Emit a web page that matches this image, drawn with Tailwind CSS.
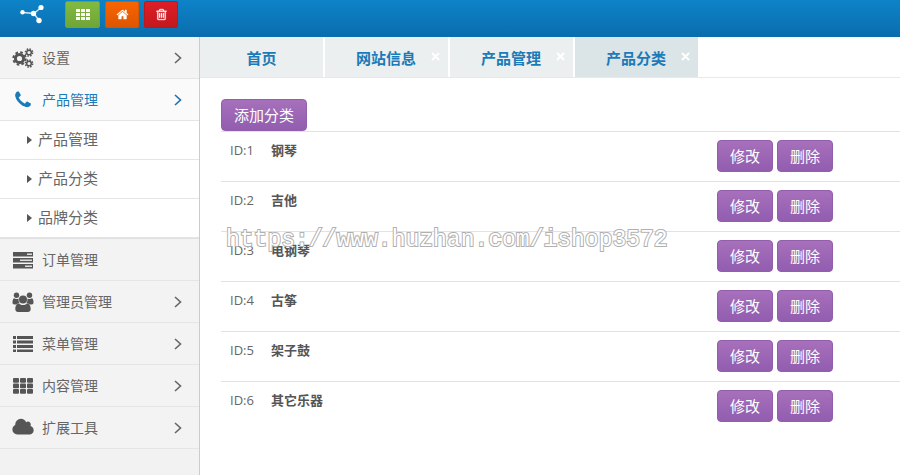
<!DOCTYPE html>
<html lang="zh-CN">
<head>
  <meta charset="UTF-8" />
  <meta name="viewport" content="width=device-width, initial-scale=1.0" />
  <title>产品分类</title>
  <script src="https://cdn.jsdelivr.net/npm/@tailwindcss/browser@4"></script>
</head>
<body class="relative min-h-screen flex flex-col bg-white font-['Open_Sans','Noto_Sans_CJK_SC',sans-serif] text-[#666]">

  <!-- top bar -->
  <header class="h-[37px] flex items-start pl-5 bg-linear-to-b from-[#0e83c8] to-[#0a6dad]">
    <a href="#" aria-label="Logo" class="w-[45px] pt-1">
      <svg class="w-6 h-5" viewBox="0 0 24 20" fill="#fff" stroke="#fff">
        <path d="M3 8.500L14 9.500L21 3.500M14 9.500L19 16.500" fill="none" stroke="#d5e8f5" stroke-width="1.300"/>
        <g stroke="none"><circle cx="2.500" cy="8.300" r="2.200"/><circle cx="13.500" cy="9.500" r="2.700"/><circle cx="21" cy="3.500" r="2.600"/><circle cx="19" cy="16.500" r="2.700"/></g>
      </svg>
    </a>
    <div class="flex gap-[5px] pt-px">
      <button aria-label="菜单" class="w-[35px] h-[27px] flex items-center justify-center rounded-xs border border-[#6da436] bg-linear-to-b from-[#82ba41] to-[#6fa537]">
        <svg class="w-[14px] h-[11px]" viewBox="0 0 14 11" fill="#fff"><path d="M0 0h4v3H0zM5 0h4v3H5zM10 0h4v3h-4zM0 4h4v3H0zM5 4h4v3H5zM10 4h4v3h-4zM0 8h4v3H0zM5 8h4v3H5zM10 8h4v3h-4z"/></svg>
      </button>
      <button aria-label="首页" class="w-[34px] h-[27px] flex items-center justify-center rounded-xs border border-[#d95600] bg-linear-to-b from-[#fa6400] to-[#dd5600]">
        <svg class="size-[13px]" viewBox="0 0 1792 1792" fill="#fff"><path d="M1472 992v480q0 26-19 45t-45 19h-384v-384h-256v384h-384q-26 0-45-19t-19-45v-480q0-1 .5-3t.5-3l575-474 575 474q1 2 1 6zm223-69l-62 74q-8 9-21 11h-3q-13 0-21-7l-692-577-692 577q-12 8-24 7-13-2-21-11l-62-74q-8-10-7-23.500t11-21.500l719-599q32-26 76-26t76 26l244 204v-195q0-14 9-23t23-9h192q14 0 23 9t9 23v408l219 182q10 8 11 21.500t-7 23.500z"/></svg>
      </button>
      <button aria-label="删除" class="w-[34px] h-[27px] flex items-center justify-center rounded-xs border border-[#c0171c] bg-linear-to-b from-[#dd1f26] to-[#c4181f]">
        <svg class="size-[13px]" viewBox="0 0 1792 1792" fill="#fff" stroke="#fff" stroke-width="40"><path d="M704 736v576q0 14-9 23t-23 9h-64q-14 0-23-9t-9-23v-576q0-14 9-23t23-9h64q14 0 23 9t9 23zm256 0v576q0 14-9 23t-23 9h-64q-14 0-23-9t-9-23v-576q0-14 9-23t23-9h64q14 0 23 9t9 23zm256 0v576q0 14-9 23t-23 9h-64q-14 0-23-9t-9-23v-576q0-14 9-23t23-9h64q14 0 23 9t9 23zm128 724v-948h-896v948q0 22 7 40.500t14.500 27 10.500 8.500h832q3 0 10.500-8.500t14.500-27 7-40.500zm-672-1076h448l-48-117q-7-9-17-11h-317q-10 2-17 11zm928 32v64q0 14-9 23t-23 9h-96v948q0 83-47 143.500t-113 60.500h-832q-66 0-113-58.500t-47-141.500v-952h-96q-14 0-23-9t-9-23v-64q0-14 9-23t23-9h309l70-167q15-37 54-63t79-26h320q40 0 79 26t54 63l70 167h309q14 0 23 9t9 23z"/></svg>
      </button>
    </div>
  </header>

  <div class="flex-1 flex">
    <!-- sidebar -->
    <nav class="w-[200px] shrink-0 border-r border-[#ccc] bg-[#f2f2f2] text-sm">
      <ul>
        <li>
          <a href="#" class="h-[42px] flex items-center pl-3 pr-[17px] border-b border-[#e5e5e5] bg-[#f3f3f3]">
            <svg class="w-[22px] h-5 mr-2" viewBox="0 0 22 20" fill="none" stroke="#555">
              <circle cx="7.500" cy="10.500" r="4.100" stroke-width="3"/><circle cx="7.500" cy="10.500" r="6.200" stroke-width="2" stroke-dasharray="2.600 2.270"/>
              <circle cx="17" cy="4.500" r="2.300" stroke-width="1.500"/><circle cx="17" cy="4.500" r="3.600" stroke-width="1.500" stroke-dasharray="1.500 1.330"/>
              <circle cx="17" cy="15.500" r="2.300" stroke-width="1.500"/><circle cx="17" cy="15.500" r="3.600" stroke-width="1.500" stroke-dasharray="1.500 1.330"/>
            </svg>
            <span class="flex-1">设置</span>
            <svg class="w-2 h-3" viewBox="0 0 8 12" fill="none" stroke="#666" stroke-width="1.600"><path d="M1 1l5.500 5L1 11"/></svg>
          </a>
        </li>
        <li>
          <a href="#" class="h-[42px] flex items-center pl-3 pr-[17px] border-b border-[#e5e5e5] bg-[#fafafa] text-[#1b7bb8]">
            <svg class="w-[22px] h-5 mr-2" viewBox="0 0 1792 1792" fill="#1b7bb8"><path d="M1600 1240q0 27-10 70.500t-21 68.500q-21 50-122 106-94 51-186 51-27 0-53-3.500t-57.500-12.500-47-14.500-55.500-20.500-49-18q-98-35-175-83-127-79-264-216t-216-264q-48-77-83-175-3-9-18-49t-20.500-55.500-14.500-47-12.500-57.500-3.500-53q0-92 51-186 56-101 106-122 25-11 68.500-21t70.500-10q14 0 21 3 18 6 53 76 11 19 30 54t35 63.500 31 53.500q3 4 17.500 25t21.500 35.500 7 28.500q0 20-28.500 50t-62 55-62 53-28.500 46q0 9 5 22.500t8.500 20.500 14 24 11.500 19q76 137 174 235t235 174q2 1 19 11.500t24 14 20.500 8.500 22.500 5q18 0 46-28.500t53-62 55-62 50-28.500q14 0 28.500 7t35.500 21.500 25 17.500q25 15 53.500 31t63.500 35 54 30q70 35 76 53 3 7 3 21z"/></svg>
            <span class="flex-1">产品管理</span>
            <svg class="w-2 h-3" viewBox="0 0 8 12" fill="none" stroke="#1b6fae" stroke-width="1.600"><path d="M1 1l5.500 5L1 11"/></svg>
          </a>
          <ul class="bg-white border-b border-[#e0e0e0] text-[15px]">
            <li><a href="#" class="h-[39px] flex items-center pl-[27px] gap-[6px] border-b border-[#e5e5e5]"><svg class="w-[5px] h-2" viewBox="0 0 5 8" fill="#555"><path d="M0 0l5 4-5 4z"/></svg>产品管理</a></li>
            <li><a href="#" class="h-[39px] flex items-center pl-[27px] gap-[6px] border-b border-[#e5e5e5]"><svg class="w-[5px] h-2" viewBox="0 0 5 8" fill="#555"><path d="M0 0l5 4-5 4z"/></svg>产品分类</a></li>
            <li><a href="#" class="h-[39px] flex items-center pl-[27px] gap-[6px] border-b border-[#e5e5e5]"><svg class="w-[5px] h-2" viewBox="0 0 5 8" fill="#555"><path d="M0 0l5 4-5 4z"/></svg>品牌分类</a></li>
          </ul>
        </li>
        <li>
          <a href="#" class="h-[42px] flex items-center pl-3 pr-[17px] border-b border-[#e5e5e5] bg-[#f3f3f3]">
            <svg class="w-[22px] h-5 mr-2" viewBox="0 0 22 20" fill="#555"><path d="M1 2h20v4.500H1zM1 8h20v4.500H1zM1 14h20v4.500H1z"/><path d="M15 3.500h5v1.500h-5zM8 9.500h12V11H8zM13 15.500h7V17h-7z" fill="#ddd"/></svg>
            <span class="flex-1">订单管理</span>
          </a>
        </li>
        <li>
          <a href="#" class="h-[42px] flex items-center pl-3 pr-[17px] border-b border-[#e5e5e5] bg-[#f3f3f3]">
            <svg class="w-[22px] h-5 mr-2" viewBox="0 0 22 20" fill="#555">
              <circle cx="4.500" cy="3.300" r="2.700"/><circle cx="17.500" cy="3.300" r="2.700"/>
              <path d="M2 6.300c1.500 1 3.500 1 4.700.2-.4 2 .1 3.500 1 4.700-1.400 0-2.500.5-3.300 1.300H2.500C1 12.500.5 11.700.5 10.500.5 8.500 1 6.500 2 6.300zM20 6.300c-1.500 1-3.500 1-4.700.2.4 2-.1 3.500-1 4.700 1.400 0 2.500.5 3.300 1.300h1.900c1.500 0 2-.8 2-2 0-2-.5-4-1.500-4.200z"/>
              <circle cx="11" cy="7.500" r="4"/>
              <path d="M7 11.500c2.400 2 5.600 2 8 0 2.500 0 3.700 2.600 3.700 5.500 0 1.900-1.100 3-2.900 3H6.200c-1.800 0-2.900-1.100-2.900-3 0-2.900 1.200-5.500 3.700-5.500z"/>
            </svg>
            <span class="flex-1">管理员管理</span>
            <svg class="w-2 h-3" viewBox="0 0 8 12" fill="none" stroke="#666" stroke-width="1.600"><path d="M1 1l5.500 5L1 11"/></svg>
          </a>
        </li>
        <li>
          <a href="#" class="h-[42px] flex items-center pl-3 pr-[17px] border-b border-[#e5e5e5] bg-[#f3f3f3]">
            <svg class="w-[22px] h-5 mr-2" viewBox="0 0 22 20" fill="#555"><path d="M1 2h3v3H1zM5 2h16v3H5zM1 6.500h3v3H1zM5 6.500h16v3H5zM1 11h3v3H1zM5 11h16v3H5zM1 15.500h3v2.500H1zM5 15.500h16v2.500H5z"/></svg>
            <span class="flex-1">菜单管理</span>
            <svg class="w-2 h-3" viewBox="0 0 8 12" fill="none" stroke="#666" stroke-width="1.600"><path d="M1 1l5.500 5L1 11"/></svg>
          </a>
        </li>
        <li>
          <a href="#" class="h-[42px] flex items-center pl-3 pr-[17px] border-b border-[#e5e5e5] bg-[#f3f3f3]">
            <svg class="w-[22px] h-5 mr-2" viewBox="0 0 22 20" fill="#555">
              <rect x="1" y="2" width="6" height="4.700" rx="1"/><rect x="8" y="2" width="6" height="4.700" rx="1"/><rect x="15" y="2" width="6" height="4.700" rx="1"/>
              <rect x="1" y="7.500" width="6" height="4.700" rx="1"/><rect x="8" y="7.500" width="6" height="4.700" rx="1"/><rect x="15" y="7.500" width="6" height="4.700" rx="1"/>
              <rect x="1" y="13" width="6" height="4.700" rx="1"/><rect x="8" y="13" width="6" height="4.700" rx="1"/><rect x="15" y="13" width="6" height="4.700" rx="1"/>
            </svg>
            <span class="flex-1">内容管理</span>
            <svg class="w-2 h-3" viewBox="0 0 8 12" fill="none" stroke="#666" stroke-width="1.600"><path d="M1 1l5.500 5L1 11"/></svg>
          </a>
        </li>
        <li>
          <a href="#" class="h-[42px] flex items-center pl-3 pr-[17px] border-b border-[#e5e5e5] bg-[#f3f3f3]">
            <svg class="w-[22px] h-5 mr-2" viewBox="30 64 1984 1792" fill="#555"><path d="M1984 1152q0 159-112.500 271.500t-271.500 112.500h-1088q-185 0-316.500-131.500t-131.500-316.500q0-132 71-241.500t187-163.500q-2-28-2-43 0-212 150-362t362-150q158 0 286.500 88t187.500 230q70-62 166-62 106 0 181 75t75 181q0 75-41 138 129 30 213 134.500t84 239.500z"/></svg>
            <span class="flex-1">扩展工具</span>
            <svg class="w-2 h-3" viewBox="0 0 8 12" fill="none" stroke="#666" stroke-width="1.600"><path d="M1 1l5.500 5L1 11"/></svg>
          </a>
        </li>
      </ul>
    </nav>

    <main class="flex-1">
      <!-- tabs -->
      <div class="h-[41px] flex gap-[2px] border-b border-[#e8eaea] text-[15px] font-bold text-[#1b7bb8]">
        <a href="#" class="w-[123px] flex items-center justify-center bg-[#ebefef] pt-0.5">首页</a>
        <div class="w-[123px] flex items-center justify-end bg-[#ebefef] pt-0.5 pr-2 gap-[15px]">
          <a href="#">网站信息</a>
          <button aria-label="关闭" class="mb-1"><svg class="size-[9px]" viewBox="0 0 9 9" stroke="#fff" stroke-width="2"><path d="M1 1l7 7M8 1L1 8"/></svg></button>
        </div>
        <div class="w-[123px] flex items-center justify-end bg-[#ebefef] pt-0.5 pr-2 gap-[15px]">
          <a href="#">产品管理</a>
          <button aria-label="关闭" class="mb-1"><svg class="size-[9px]" viewBox="0 0 9 9" stroke="#fff" stroke-width="2"><path d="M1 1l7 7M8 1L1 8"/></svg></button>
        </div>
        <div class="w-[123px] flex items-center justify-end bg-[#dbe4e6] pt-0.5 pr-2 gap-[15px]">
          <a href="#">产品分类</a>
          <button aria-label="关闭" class="mb-1"><svg class="size-[9px]" viewBox="0 0 9 9" stroke="#fff" stroke-width="2"><path d="M1 1l7 7M8 1L1 8"/></svg></button>
        </div>
      </div>

      <section class="pl-[21px] pt-[21px]">
        <button class="block h-8 px-3 rounded-sm border border-[#935fac] bg-linear-to-b from-[#a670bb] to-[#935db0] text-[15px] leading-[30px] text-white">添加分类</button>
        <table class="w-full text-[13px] leading-5">
          <tbody id="list"></tbody>
        </table>
      </section>
    </main>
  </div>

  <!-- watermark -->
  <div class="absolute left-[226px] top-[224px] pointer-events-none antialiased font-['Liberation_Mono',monospace] text-[23px] leading-8 text-white [-webkit-text-stroke:2px_#b0b0b0] [paint-order:stroke_fill]">https://www.huzhan.com/ishop3572</div>

  <script>
    const categories = ['钢琴', '吉他', '电钢琴', '古筝', '架子鼓', '其它乐器'];
    const btn = 'h-8 px-3 rounded-sm border border-[#935fac] bg-linear-to-b from-[#a670bb] to-[#935db0] text-[15px] leading-[30px] text-white';

    document.getElementById('list').innerHTML = categories.map((name, i) => `
      <tr class="h-[50px] border-t border-[#e2e2e2]">
        <td class="w-[50px] pl-[9px] pt-2 align-top">ID:${i + 1}</td>
        <td class="pt-2 align-top font-bold text-[#555]">${name}</td>
        <td class="w-[28%] pl-[7px] pt-2 align-top">
          <div class="flex gap-1">
            <button class="${btn}">修改</button>
            <button class="${btn}">删除</button>
          </div>
        </td>
      </tr>`).join('');
  </script>
</body>
</html>
